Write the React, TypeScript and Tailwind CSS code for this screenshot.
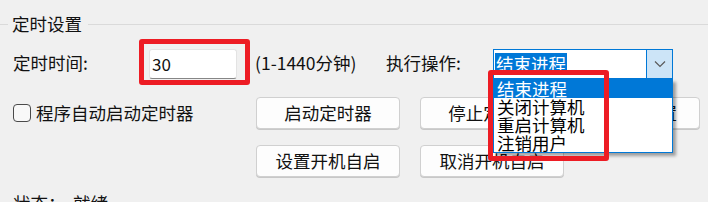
import React from 'react'

const font = '"Microsoft YaHei UI", "Noto Sans CJK SC", "Noto Sans", sans-serif'

function Button({ label, className = '' }: { label: string; className?: string }) {
  return (
    <div
      className={`h-[32px] w-[144px] rounded-[4px] border border-[#d0d0d0] bg-[#fdfdfd] flex items-center justify-center shadow-[0_1px_0_#c8c8c8] ${className}`}
    >
      {label}
    </div>
  )
}

export default function App() {
  const options = ['结束进程', '关闭计算机', '重启计算机', '注销用户']

  return (
    <div
      className="relative w-[708px] h-[202px] overflow-hidden bg-[#f0f0f0] text-[17.5px] text-[#111]"
      style={{ fontFamily: font }}
    >
      {/* group header */}
      <div className="flex items-center h-[48px]">
        <div className="w-[8px] h-px bg-[#dadada]" />
        <span className="px-[4px] leading-[24px]">定时设置</span>
        <div className="flex-1 h-px bg-[#dadada] ml-[2px]" />
      </div>

      {/* row 1 */}
      <div className="flex items-center h-[32px] pl-[13px]">
        <span className="w-[136px] leading-[24px] -mt-[3px]">定时时间:</span>
        <div className="relative w-[88px] h-[30px]">
          <div className="w-full h-full rounded-[3px] border border-[#e3e3e3] border-b-[#868686] bg-white flex items-center pl-[2px] text-[17px]">
            30
          </div>
          {/* red highlight */}
          <div className="absolute left-[-10px] top-[-10px] w-[111px] h-[46px] border-[5px] border-[#ed1c24] rounded-[3px]" />
        </div>
        <span className="ml-[18px] w-[131px] leading-[24px] -mt-[3px]">(1-1440分钟)</span>
        <span className="w-[107px] leading-[24px] -mt-[3px]">执行操作:</span>
        <div className="relative w-[180px] h-[30px] mt-[-1px]">
          <div className="w-full h-full border border-[#0078d7] bg-white flex items-center">
            <span className="ml-[1px] bg-[#0078d7] text-white leading-[22px] px-[1px]">结束进程</span>
            <div className="ml-auto w-[26px] h-full bg-[#cce4f7] border-l border-[#0078d7] flex items-center justify-center">
              <svg width="12" height="8" viewBox="0 0 12 8">
                <path d="M1 1.5 L6 6.5 L11 1.5" fill="none" stroke="#5a5a5a" strokeWidth="1.2" />
              </svg>
            </div>
          </div>
          {/* dropdown list */}
          <div className="absolute left-0 top-[30px] w-[180px] h-[74px] bg-white border border-[#0078d7] shadow-[3px_3px_3px_rgba(0,0,0,0.35)] z-10 text-[17.5px]">
            {options.map((o, i) => (
              <div
                key={o}
                className={`h-[18px] leading-[18px] pl-[3px] ${i === 0 ? 'bg-[#0078d7] text-white' : 'text-black'}`}
              >
                {o}
              </div>
            ))}
          </div>
          {/* red highlight */}
          <div className="absolute left-[-5px] top-[21px] w-[121px] h-[91px] border-[5px] border-[#ed1c24] rounded-[3px] z-20" />
        </div>
      </div>

      {/* row 2 */}
      <div className="flex items-center h-[32px] mt-[17px] pl-[13px]">
        <div className="w-[243px] flex items-center">
          <div className="w-[18px] h-[18px] rounded-[4px] border border-[#4a4a4a] bg-[#f8f8f8]" />
          <span className="ml-[5px] leading-[24px]">程序自动启动定时器</span>
        </div>
        <Button label="启动定时器" />
        <Button label="停止定时器" className="ml-[20px]" />
        <Button label="保存设置" className="ml-[20px] !w-[116px]" />
      </div>

      {/* row 3 */}
      <div className="flex items-center h-[32px] mt-[16px] pl-[256px]">
        <Button label="设置开机自启" />
        <Button label="取消开机自启" className="ml-[20px]" />
      </div>

      {/* status */}
      <div className="flex pl-[13px] mt-[14px] leading-[24px]">
        <span className="w-[60px]">状态：</span>
        <span>就绪</span>
      </div>
    </div>
  )
}
